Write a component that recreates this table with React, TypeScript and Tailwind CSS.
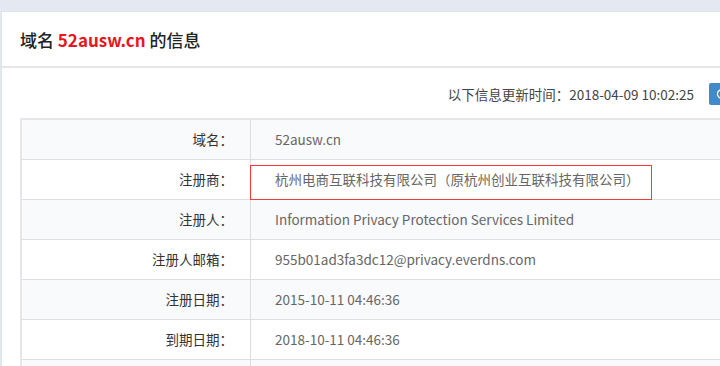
import React from "react";

const rows: { label: string; value: string }[] = [
  { label: "域名：", value: "52ausw.cn" },
  { label: "注册商：", value: "杭州电商互联科技有限公司（原杭州创业互联科技有限公司）" },
  { label: "注册人：", value: "Information Privacy Protection Services Limited" },
  { label: "注册人邮箱：", value: "955b01ad3fa3dc12@privacy.everdns.com" },
  { label: "注册日期：", value: "2015-10-11 04:46:36" },
  { label: "到期日期：", value: "2018-10-11 04:46:36" },
  { label: "域名状态：", value: "clientTransferProhibited" },
];

export default function App() {
  return (
    <div
      className="w-[720px] h-[366px] overflow-hidden bg-[#e4e9f1] pt-[11px] pl-[1px]"
      style={{ fontFamily: '"Noto Sans CJK SC", "Liberation Sans", sans-serif' }}
    >
      <div className="w-[1000px] bg-white border border-[#dfe3ea]">
        <div className="h-[56px] flex items-center pl-[18px] border-b-2 border-[#e6e6e6]">
          <h1 className="text-[17px] font-medium text-[#222] leading-none">
            域名 <span className="text-[#e8161f] font-bold">52ausw.cn</span> 的信息
          </h1>
        </div>
        <div className="px-[18px] pt-[15px]">
          <div className="flex items-center h-[22px]">
            <div className="w-[689px] text-right text-[13.5px] text-[#444] pr-[15px]">
              以下信息更新时间：2018-04-09 10:02:25
            </div>
            <div className="h-[22px] bg-[#428bca] text-white text-[13px] flex items-center gap-1 px-[7px] rounded-[2px] w-[80px]">
              <svg width="12" height="12" viewBox="0 0 24 24" fill="none" stroke="white" strokeWidth="2.5" strokeLinecap="round">
                <path d="M21 12a9 9 0 1 1-3-6.7" />
                <path d="M21 3v6h-6" />
              </svg>
              更新
            </div>
          </div>
          <div className="relative mt-[13px] w-[900px] border-2 border-[#e6e6e6]">
            {rows.map((r, i) => (
              <div
                key={i}
                className={`flex h-[40px] border-b border-[#dedede] ${i % 2 === 0 ? "bg-[#f9fafc]" : "bg-white"}`}
              >
                <div className="w-[229px] shrink-0 border-r border-[#dedede] flex items-center justify-end pr-[17px] text-[13.5px] text-[#333]">
                  {r.label}
                </div>
                <div className="flex-1 flex items-center pl-[24px] text-[13.5px] text-[#666]">
                  {r.value}
                </div>
              </div>
            ))}
            <div className="absolute left-[228px] top-[45px] w-[402px] h-[35px] border-[1.5px] border-[#f23a3a]" />
          </div>
        </div>
      </div>
    </div>
  );
}
